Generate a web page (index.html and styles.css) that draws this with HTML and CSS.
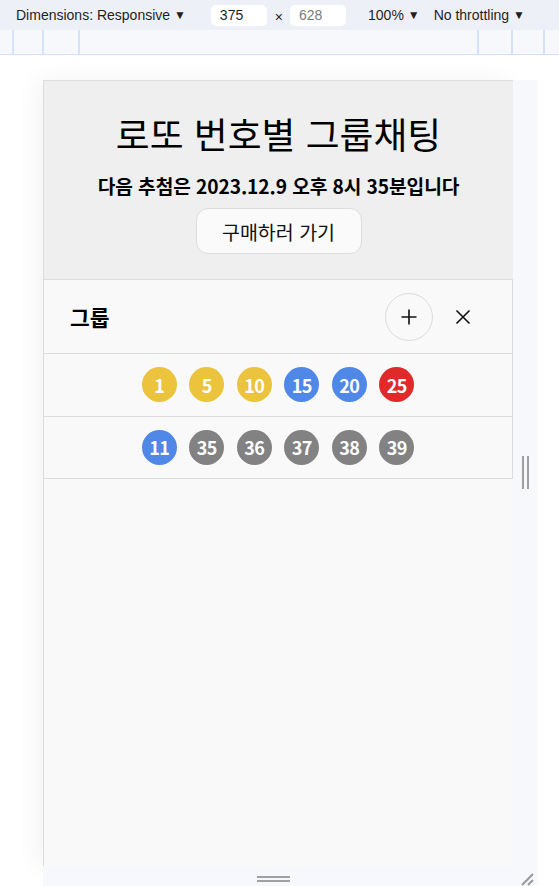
FILE: index.html
```html
<!DOCTYPE html>
<html lang="ko">
<head>
<meta charset="utf-8">
<title>로또 번호별 그룹채팅</title>
<link rel="stylesheet" href="styles.css">
</head>
<body>
<div class="toolbar">
  <span class="tb-item dims">Dimensions: Responsive <span class="caret">&#9660;</span></span>
  <span class="tb-input">375</span>
  <span class="times">×</span>
  <span class="tb-input muted">628</span>
  <span class="tb-item zoom">100% <span class="caret">&#9660;</span></span>
  <span class="tb-item throttle">No throttling <span class="caret">&#9660;</span></span>
</div>
<div class="ruler">
  <div class="ruler-left">
    <span class="seg s1"></span><span class="seg s2"></span><span class="seg s3"></span>
  </div>
  <div class="ruler-right">
    <span class="seg s4"></span><span class="seg s5"></span><span class="seg s6"></span>
  </div>
</div>
<div class="stage">
  <div class="device">
    <div class="screen">
      <header class="hero">
        <h1 class="title">로또 번호별 그룹채팅</h1>
        <p class="next">다음 추첨은 2023.12.9 오후 8시 35분입니다</p>
        <button class="buy">구매하러 가기</button>
      </header>
      <section class="groups">
        <div class="group-head">
          <span class="group-title">그룹</span>
          <button class="icon-btn plus" aria-label="추가">
            <svg width="18" height="18" viewBox="0 0 18 18"><path d="M9 1.5V16.5M1.5 9H16.5" stroke="#111" stroke-width="1.6" fill="none"/></svg>
          </button>
          <button class="icon-btn close" aria-label="닫기">
            <svg width="16" height="16" viewBox="0 0 16 16"><path d="M1.5 1.5L14.5 14.5M14.5 1.5L1.5 14.5" stroke="#111" stroke-width="1.6" fill="none"/></svg>
          </button>
        </div>
        <div class="ball-row">
          <span class="ball yellow">1</span>
          <span class="ball yellow">5</span>
          <span class="ball yellow">10</span>
          <span class="ball blue">15</span>
          <span class="ball blue">20</span>
          <span class="ball red">25</span>
        </div>
        <div class="ball-row">
          <span class="ball blue">11</span>
          <span class="ball grey">35</span>
          <span class="ball grey">36</span>
          <span class="ball grey">37</span>
          <span class="ball grey">38</span>
          <span class="ball grey">39</span>
        </div>
      </section>
    </div>
    <div class="bottom-strip">
      <span class="hgrip"></span>
      <svg class="corner" width="16" height="16" viewBox="0 0 16 16"><path d="M15 4L4 15M15 10L10 15" stroke="#9a9a9a" stroke-width="2" fill="none"/></svg>
    </div>
  </div>
  <div class="right-strip">
    <span class="vgrip"></span>
  </div>
</div>
</body>
</html>
```
FILE: styles.css
```css
* { box-sizing: border-box; }
html, body { margin: 0; padding: 0; }
body {
  width: 559px;
  height: 886px;
  overflow: hidden;
  background: #ffffff;
  font-family: "Noto Sans CJK KR", "Noto Sans", sans-serif;
  color: #000;
}
.toolbar {
  height: 30px;
  background: #edf0f7;
  display: flex;
  align-items: center;
  font-family: "Liberation Sans", "Noto Sans", sans-serif;
  font-size: 14px;
  color: #1f1f1f;
  padding-left: 16px;
}
.caret { font-size: 12px; position: relative; top: -1px; }
.tb-input {
  width: 56px;
  height: 21px;
  background: #fff;
  border-radius: 5px;
  padding-left: 9px;
  line-height: 21px;
  margin-left: 25px;
}
.tb-input.muted { color: #7a7a7a; margin-left: 0; }
.times { margin: 4px 7px 0 8px; font-size: 14px; }
.zoom { margin-left: 22px; }
.throttle { margin-left: 14px; }
.ruler {
  height: 25px;
  background: #f6f8fc;
  border-bottom: 1px solid #d3e3fd;
  display: flex;
  justify-content: space-between;
}
.ruler-left, .ruler-right { display: flex; height: 24px; }
.seg { height: 24px; border-left: 2px solid #d3e3fd; }
.s1 { margin-left: 12px; width: 30px; }
.s2 { width: 36px; }
.s3 { width: 2px; }
.ruler-right { margin-right: 14px; }
.s4 { width: 34px; }
.s5 { width: 32px; }
.s6 { width: 2px; }

.stage {
  display: flex;
  padding-left: 43px;
  padding-top: 25px;
}
.device {
  width: 470px;
  display: flex;
  flex-direction: column;
}
.screen {
  height: 786px;
  background: #f9f9f9;
  border-left: 1px solid #dcdcdc;
  border-top: 1px solid #dedede;
  box-shadow: -6px 0 22px rgba(0,0,0,0.05);
}
.hero {
  background: #efefef;
  height: 199px;
  border-bottom: 1px solid #dcdcdc;
  display: flex;
  flex-direction: column;
  align-items: center;
  padding-top: 30px;
}
.title {
  margin: 0;
  font-size: 36.8px;
  font-weight: 400;
  line-height: 44px;
}
.next {
  margin: 17px 0 0;
  font-size: 19.2px;
  font-weight: 700;
  line-height: 28px;
  letter-spacing: -0.1px;
}
.buy {
  margin-top: 8px;
  width: 166px;
  height: 46px;
  background: #fafafa;
  border: 1px solid #dcdcdc;
  border-radius: 12px;
  font-family: inherit;
  font-size: 19.5px;
  color: #111;
  padding: 0;
}
.groups {
  width: 469px;
  border-right: 1px solid #dcdcdc;
}
.group-head {
  height: 74px;
  display: flex;
  align-items: center;
  padding: 0 33px 0 26px;
  border-bottom: 1px solid #dcdcdc;
}
.group-title {
  font-size: 21.5px;
  font-weight: 700;
  flex: 1;
}
.icon-btn {
  background: transparent;
  border: 0;
  padding: 0;
  display: flex;
  align-items: center;
  justify-content: center;
}
.plus {
  width: 48px;
  height: 48px;
  border-radius: 50%;
  border: 1px solid #dcdcdc;
}
.close {
  width: 32px;
  height: 32px;
  margin-left: 14px;
}
.ball-row {
  height: 62.5px;
  border-bottom: 1px solid #dcdcdc;
  display: flex;
  align-items: center;
  justify-content: center;
  gap: 12.5px;
}
.ball {
  width: 35px;
  height: 35px;
  border-radius: 50%;
  color: #fff;
  font-weight: 700;
  font-size: 18px;
  display: flex;
  align-items: center;
  justify-content: center;
  letter-spacing: -0.5px;
}
.yellow { background: #ebc33d; }
.blue { background: #4f88e7; }
.red { background: #e02a2a; }
.grey { background: #828282; }

.bottom-strip {
  height: 20px;
  width: 494px;
  background: #f6f8fc;
  position: relative;
  display: flex;
  justify-content: center;
}
.hgrip {
  width: 33px;
  height: 6px;
  border-top: 2px solid #a0a0a0;
  border-bottom: 2px solid #a0a0a0;
  margin-top: 10px;
  margin-left: -34px;
}
.corner { position: absolute; right: 3px; bottom: 0; }
.right-strip {
  width: 24px;
  height: 786px;
  background: #f6f8fc;
  display: flex;
  justify-content: center;
  padding-top: 376px;
}
.vgrip {
  width: 7px;
  height: 33px;
  border-left: 2.5px solid #a0a0a0;
  border-right: 2.5px solid #a0a0a0;
}
```
